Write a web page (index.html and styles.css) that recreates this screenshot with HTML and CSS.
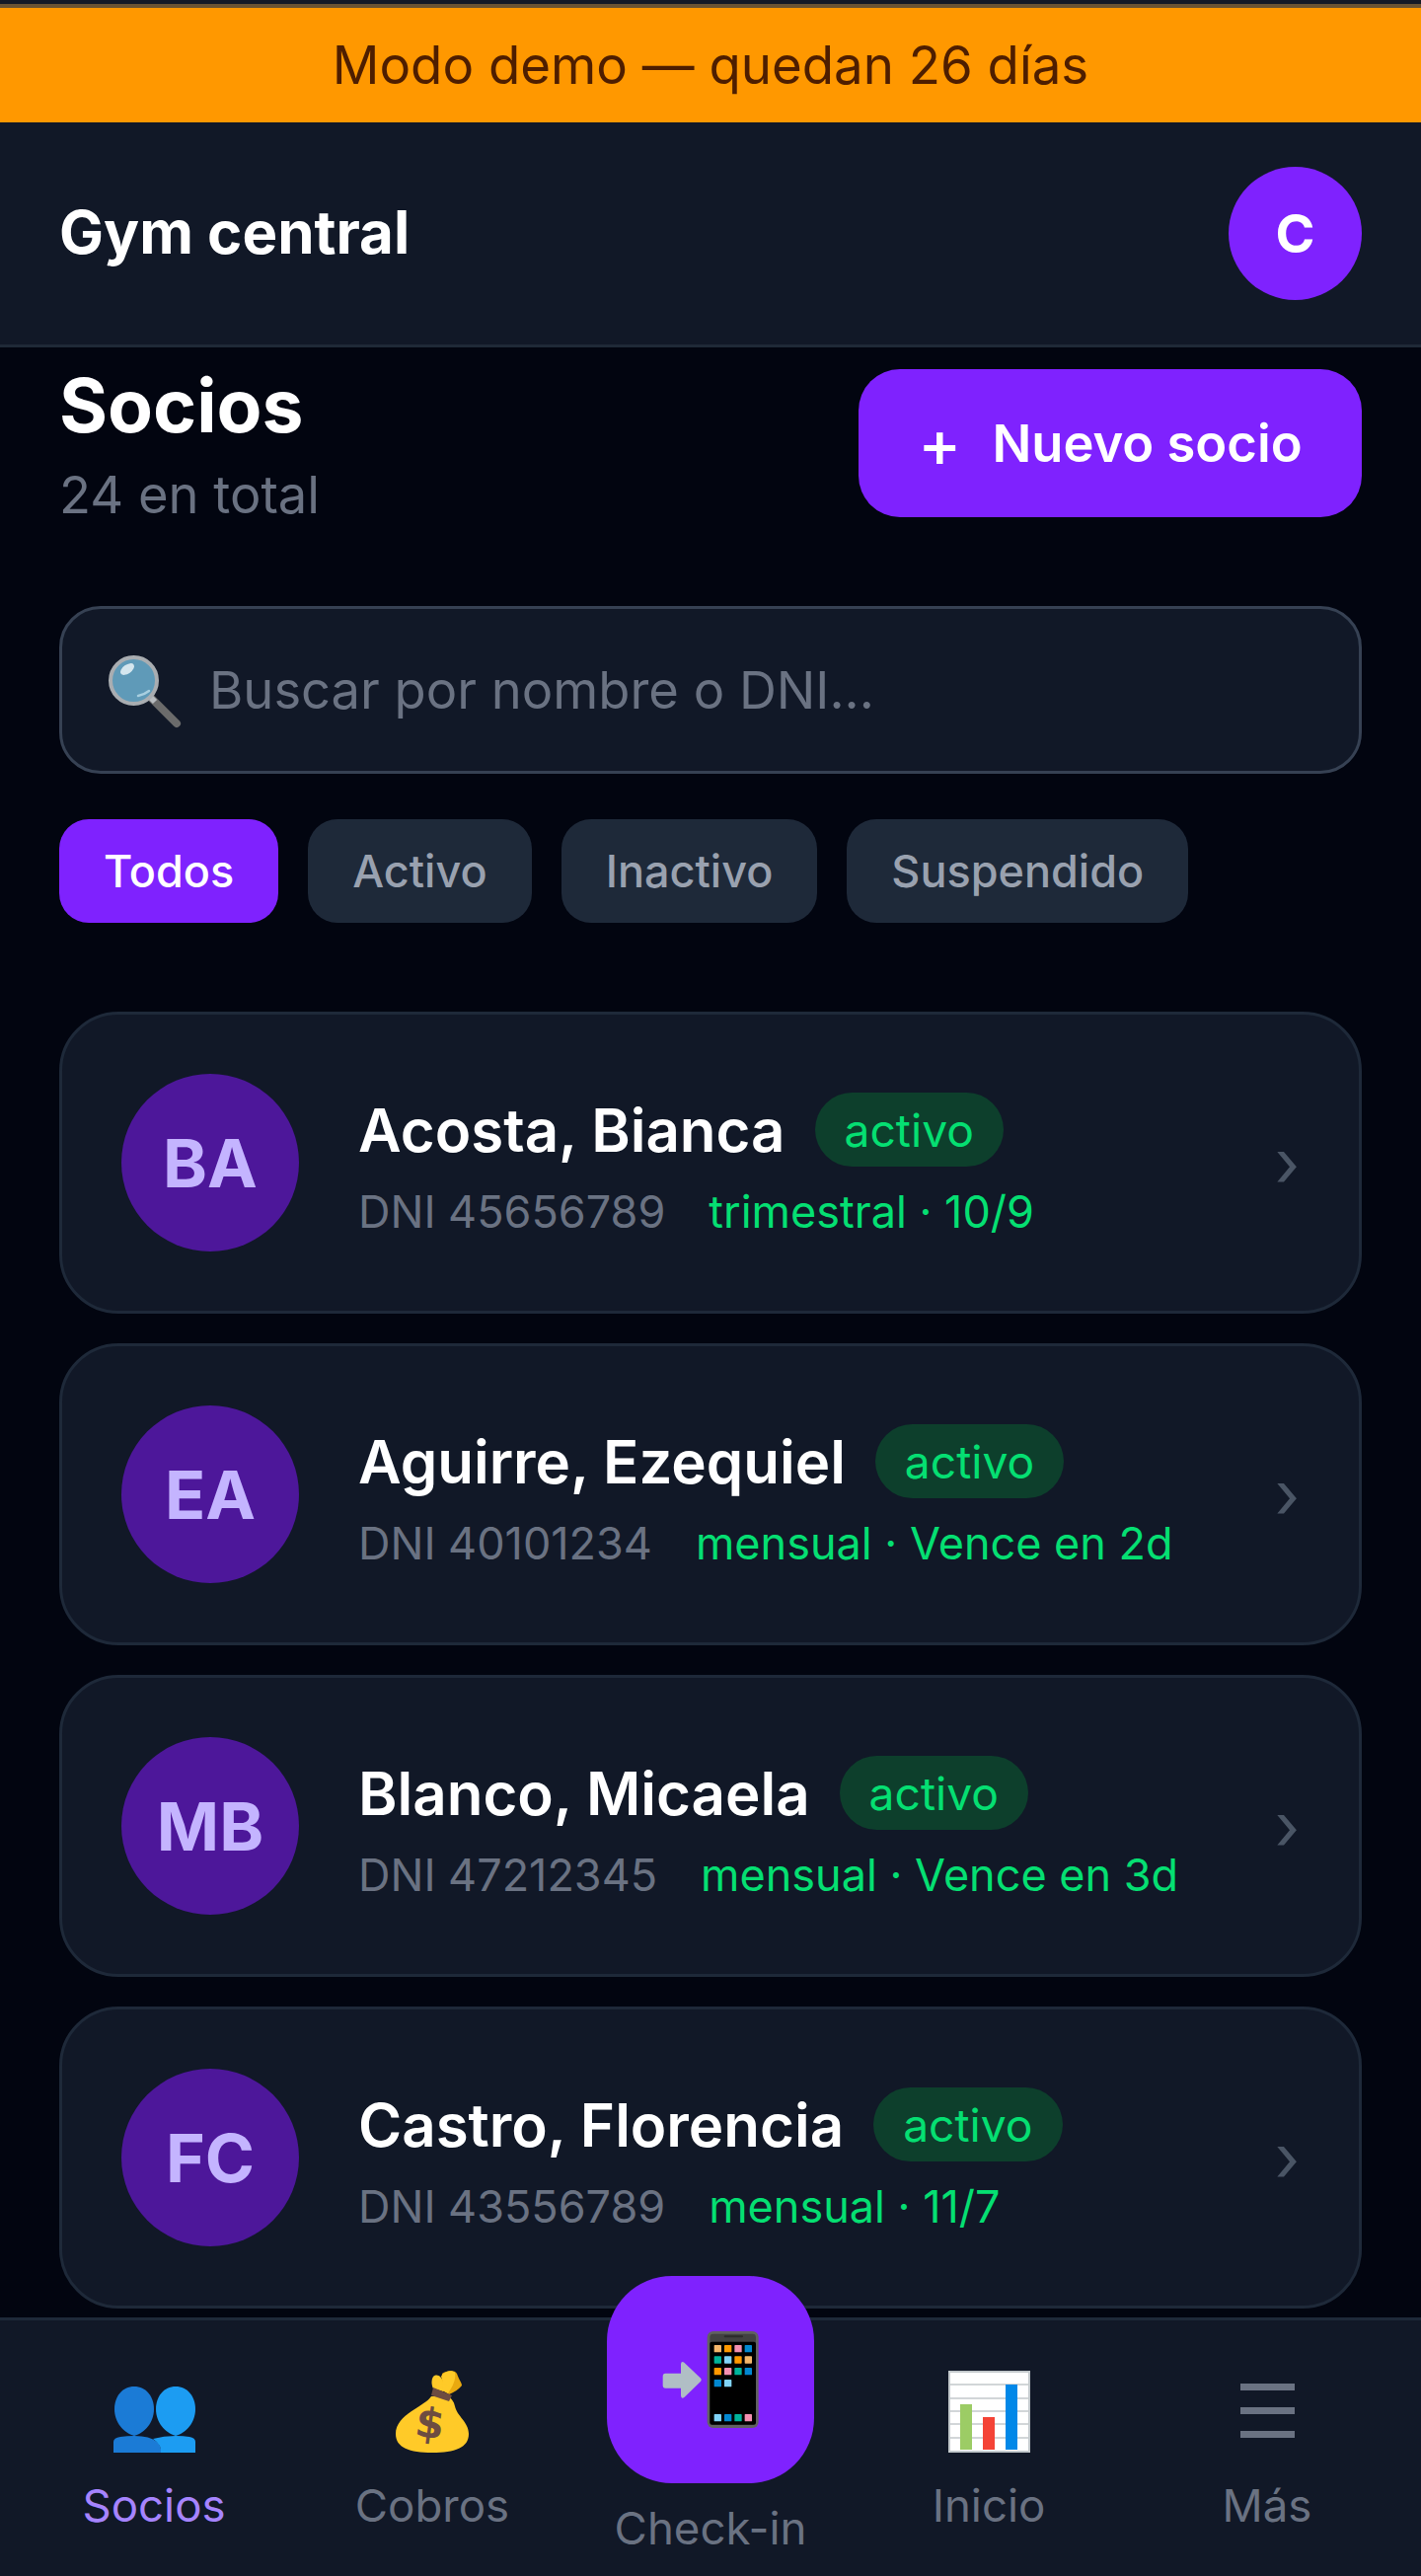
FILE: index.html
```html
<!DOCTYPE html>
<html lang="es">
<head>
    <meta charset="UTF-8">
    <meta name="viewport" content="width=device-width, initial-scale=1.0">
    <title>Socios</title>
    <link rel="stylesheet" href="styles.css">
</head>
<body>
    <div class="app">
        <div class="demo-banner">Modo demo — quedan 26 días</div>

        <header class="topbar">
            <div class="gym-name">Gym central</div>
            <div class="user-avatar">C</div>
        </header>

        <main class="content">
            <div class="page-head">
                <div>
                    <h1>Socios</h1>
                    <div class="total">24 en total</div>
                </div>
                <button class="new-btn"><span class="plus">+</span>Nuevo socio</button>
            </div>

            <div class="search">
                <svg class="search-icon" viewBox="0 0 74 74">
                    <path d="M42 42 L69 69" stroke="#6b6b6b" stroke-width="8" stroke-linecap="round"/>
                    <path d="M41 41 L47 47" stroke="#b8bcc0" stroke-width="6"/>
                    <circle cx="25.5" cy="25.5" r="23.5" fill="#5f9ab8" stroke="#a9adb1" stroke-width="4"/>
                    <ellipse cx="19" cy="14" rx="8" ry="4.5" transform="rotate(-35 19 14)" fill="#d5e6ee"/>
                    <path d="M30 41 Q36 40 41 36" stroke="#a8cfe0" stroke-width="2.5" fill="none" stroke-linecap="round"/>
                </svg>
                <input type="text" placeholder="Buscar por nombre o DNI...">
            </div>

            <div class="filters">
                <button class="chip active">Todos</button>
                <button class="chip">Activo</button>
                <button class="chip">Inactivo</button>
                <button class="chip">Suspendido</button>
            </div>

            <div class="member-list">
                <div class="member">
                    <div class="member-avatar">BA</div>
                    <div class="member-info">
                        <div class="member-top"><span class="member-name">Acosta, Bianca</span><span class="badge">activo</span></div>
                        <div class="member-sub"><span class="dni">DNI 45656789</span><span class="plan">trimestral · 10/9</span></div>
                    </div>
                    <span class="chevron">›</span>
                </div>
                <div class="member">
                    <div class="member-avatar">EA</div>
                    <div class="member-info">
                        <div class="member-top"><span class="member-name">Aguirre, Ezequiel</span><span class="badge">activo</span></div>
                        <div class="member-sub"><span class="dni">DNI 40101234</span><span class="plan">mensual · Vence en 2d</span></div>
                    </div>
                    <span class="chevron">›</span>
                </div>
                <div class="member">
                    <div class="member-avatar">MB</div>
                    <div class="member-info">
                        <div class="member-top"><span class="member-name">Blanco, Micaela</span><span class="badge">activo</span></div>
                        <div class="member-sub"><span class="dni">DNI 47212345</span><span class="plan">mensual · Vence en 3d</span></div>
                    </div>
                    <span class="chevron">›</span>
                </div>
                <div class="member">
                    <div class="member-avatar">FC</div>
                    <div class="member-info">
                        <div class="member-top"><span class="member-name">Castro, Florencia</span><span class="badge">activo</span></div>
                        <div class="member-sub"><span class="dni">DNI 43556789</span><span class="plan">mensual · 11/7</span></div>
                    </div>
                    <span class="chevron">›</span>
                </div>
            </div>
        </main>

        <nav class="bottom-nav">
            <a class="nav-item current">
                <svg class="nav-icon people-icon" viewBox="0 0 84 67">
                    <path d="M22 0 C34 0 42 10 42 23 C42 36 33 47 22 50 C11 47 2 36 2 23 C2 10 10 0 22 0 Z" fill="#1b7bd6"/>
                    <path d="M1 67 V56 Q1 52 8 51 Q15 50 22 50 Q38 50 45 56 Q50 61 49 67 Z" fill="#1b7bd6"/>
                    <path d="M64 0 C76 0 84 10 84 23 C84 36 75 47 64 50 C53 47 44 36 44 23 C44 10 52 0 64 0 Z" fill="#1c9cf2"/>
                    <path d="M41 53 Q52 50 64 50 Q72 50 78 51 Q84 52 84 56 V67 H49 Q50 59 41 53 Z" fill="#1c9cf2"/>
                </svg>
                <span>Socios</span>
            </a>
            <a class="nav-item">
                <svg class="nav-icon bag-icon" viewBox="0 0 74 83">
                    <path d="M47 3 C51 0 60 -1 62 3 C64 9 67 12 67 15 C64 19 59 22 54 24 L46 19 Z" fill="#e9a90f"/>
                    <path d="M38 6 C41 3 44 5 45 6 C48 9 49 13 48 21 L38 18 C36 14 36 9 38 6 Z" fill="#ffca28"/>
                    <path d="M46 6 C49 0 58 -1 60 2 C61 8 59 14 53 23 L47 20 C48 14 48 9 46 6 Z" fill="#ffca28"/>
                    <path d="M36 26 C30 36 0 44 0 64 C0 78 14 83 37 83 C60 83 74 78 74 64 C74 52 62 46 60 36 C59 31 56 28 54 26 Z" fill="#ffca28"/>
                    <path d="M38 17 L57 25 L54 31 L36 25 Z" fill="#6d4c41"/>
                    <text class="bag-mark" x="35" y="68" transform="rotate(8 35 52)">$</text>
                </svg>
                <span>Cobros</span>
            </a>
            <a class="nav-item checkin">
                <div class="checkin-btn">
                    <svg class="phone-icon" viewBox="60 68 294 294">
                        <path d="M70 196 H117 V168 Q118 158 127 163 L176 210 Q182 216 176 222 L128 268 Q118 276 117 264 V241 H70 Q62 241 62 232 V205 Q62 196 70 196 Z" fill="#b0bec5"/>
                        <rect x="197" y="68" width="156" height="294" rx="18" fill="#616161"/>
                        <rect x="205" y="76" width="140" height="276" rx="10" fill="#424242"/>
                        <rect x="205" y="100" width="140" height="252" rx="6" fill="#000"/>
                        <rect x="248" y="81" width="58" height="6" rx="3" fill="#2b2b2b"/>
                        <g fill="#f4b66b">
                            <rect x="218" y="110" width="22" height="22" rx="2"/>
                            <rect x="311" y="144" width="22" height="22" rx="2"/>
                        </g>
                        <g fill="#ff9800">
                            <rect x="249" y="110" width="22" height="22" rx="2"/>
                            <rect x="280" y="144" width="22" height="22" rx="2"/>
                            <rect x="218" y="179" width="22" height="22" rx="2"/>
                        </g>
                        <g fill="#f48fb1">
                            <rect x="280" y="110" width="22" height="22" rx="2"/>
                            <rect x="249" y="179" width="22" height="22" rx="2"/>
                            <rect x="311" y="320" width="22" height="22" rx="2"/>
                        </g>
                        <g fill="#0288d1">
                            <rect x="311" y="110" width="22" height="22" rx="2"/>
                            <rect x="311" y="179" width="22" height="22" rx="2"/>
                            <rect x="218" y="215" width="22" height="22" rx="2"/>
                            <rect x="249" y="320" width="22" height="22" rx="2"/>
                        </g>
                        <g fill="#00b39b">
                            <rect x="218" y="144" width="22" height="22" rx="2"/>
                            <rect x="280" y="179" width="22" height="22" rx="2"/>
                            <rect x="280" y="320" width="22" height="22" rx="2"/>
                        </g>
                        <g fill="#81d4fa">
                            <rect x="249" y="144" width="22" height="22" rx="2"/>
                            <rect x="249" y="215" width="22" height="22" rx="2"/>
                            <rect x="218" y="320" width="22" height="22" rx="2"/>
                        </g>
                    </svg>
                </div>
                <span>Check-in</span>
            </a>
            <a class="nav-item">
                <svg class="nav-icon chart-icon" viewBox="0 0 83 83">
                    <rect width="83" height="83" fill="#fff"/>
                    <path d="M0 14 H83 M0 28 H83 M0 41 H83 M0 54 H83 M0 68 H83" stroke="#c3c9cc" stroke-width="1.5"/>
                    <rect x="12" y="34" width="12" height="46" fill="#9ccc65"/>
                    <rect x="35" y="47" width="12" height="33" fill="#f44336"/>
                    <rect x="58" y="14" width="12" height="66" fill="#0288e8"/>
                    <rect x="1" y="1" width="81" height="81" fill="none" stroke="#c3c9cc" stroke-width="2"/>
                </svg>
                <span>Inicio</span>
            </a>
            <a class="nav-item">
                <div class="menu-icon"><i></i><i></i><i></i></div>
                <span>Más</span>
            </a>
        </nav>
    </div>
</body>
</html>
```

FILE: styles.css
```css
* {
    box-sizing: border-box;
}

body {
    font-family: Inter, 'Noto Sans', sans-serif;
    margin: 0;
    background: #020510;
    color: white;
}

.app {
    position: relative;
    height: 2610px;
    overflow: hidden;
    display: flex;
    flex-direction: column;
    border-top: 4px solid #141a26;
}

.demo-banner {
    height: 120px;
    border-top: 4px solid #6b5433;
    background-color: #ff9800;
    color: #4e1e00;
    font-size: 52.8px;
    display: flex;
    align-items: center;
    justify-content: center;
}

.topbar {
    height: 228px;
    background-color: #111827;
    border-bottom: 3px solid #1f2937;
    padding: 0 60px;
    display: flex;
    align-items: center;
    justify-content: space-between;
}

.gym-name {
    font-size: 60px;
    font-weight: 700;
    margin-bottom: 3px;
}

.user-avatar {
    width: 135px;
    height: 135px;
    border-radius: 50%;
    background-color: #7f22fe;
    font-size: 54px;
    font-weight: 700;
    display: flex;
    align-items: center;
    justify-content: center;
}

.content {
    padding: 22px 60px 0;
}

.page-head {
    height: 150px;
    display: flex;
    justify-content: space-between;
    align-items: flex-start;
    margin-bottom: 90px;
}

h1 {
    font-size: 75px;
    font-weight: 700;
    line-height: 73px;
    margin: 0;
}

.total {
    color: #6a7282;
    font-size: 52.5px;
    margin-top: 22px;
}

.new-btn {
    font-family: inherit;
    width: 510px;
    height: 150px;
    border: none;
    border-radius: 42px;
    background-color: #7f22fe;
    color: white;
    font-size: 52.5px;
    font-weight: 600;
    display: flex;
    align-items: center;
    justify-content: center;
}

.plus {
    font-size: 66px;
    font-weight: 500;
    margin-right: 31px;
}

.search {
    height: 170px;
    background-color: #111827;
    border: 3px solid #364153;
    border-radius: 42px;
    padding: 0 47px;
    display: flex;
    align-items: center;
    gap: 28px;
    margin-bottom: 46px;
}

.search-icon {
    width: 74px;
    height: 74px;
    flex: none;
    margin-top: 4px;
}

.search input {
    flex: 1;
    background: none;
    border: none;
    outline: none;
    padding: 0;
    color: white;
    font-family: inherit;
    font-size: 52.5px;
}

.search input::placeholder {
    color: #6a7282;
    opacity: 1;
}

.filters {
    display: flex;
    gap: 30px;
    margin-bottom: 90px;
}

.chip {
    font-family: inherit;
    height: 105px;
    padding: 0 45px;
    border: none;
    border-radius: 30px;
    background-color: #1e2939;
    color: #99a1af;
    font-size: 45px;
    font-weight: 500;
}

.chip.active {
    background-color: #7f22fe;
    color: white;
}

.member-list {
    display: flex;
    flex-direction: column;
    gap: 30px;
}

.member {
    height: 306px;
    background-color: #111827;
    border: 3px solid #1e2939;
    border-radius: 60px;
    padding: 0 60px;
    display: flex;
    align-items: center;
}

.member-avatar {
    width: 180px;
    height: 180px;
    border-radius: 50%;
    background-color: #4d179a;
    color: #c4b4ff;
    font-size: 68px;
    font-weight: 700;
    display: flex;
    align-items: center;
    justify-content: center;
    flex: none;
    margin-right: 60px;
}

.member-info {
    flex: 1;
    padding-top: 6px;
}

.member-top {
    display: flex;
    align-items: center;
    gap: 30px;
}

.member-name {
    font-size: 60px;
    font-weight: 600;
}

.badge {
    background-color: #0d3f2c;
    color: #05df72;
    font-size: 46.2px;
    border-radius: 38px;
    height: 75px;
    padding: 0 30px;
    display: flex;
    align-items: center;
}

.member-sub {
    font-size: 45px;
    margin-top: 18px;
    display: flex;
    gap: 44px;
}

.dni {
    color: #6a7282;
}

.plan {
    color: #05df72;
}

.chevron {
    color: #4a5565;
    font-size: 66px;
}

.bottom-nav {
    position: absolute;
    left: 0;
    right: 0;
    bottom: 0;
    height: 262px;
    background-color: #111827;
    border-top: 3px solid #1e2939;
    display: flex;
    padding: 0 15px;
}

.nav-item {
    flex: 1;
    display: flex;
    flex-direction: column;
    align-items: center;
    justify-content: flex-end;
    padding-bottom: 44px;
    color: #6a7282;
    font-size: 45.6px;
}

.nav-item.current {
    color: #a684ff;
}

.nav-icon {
    flex: none;
    margin-bottom: 26px;
}

.people-icon {
    width: 84px;
    height: 67px;
}

.bag-icon {
    width: 74px;
    height: 83px;
}

.chart-icon {
    width: 83px;
    height: 83px;
}

.checkin {
    padding-bottom: 21px;
}

.checkin-btn {
    width: 210px;
    height: 210px;
    border-radius: 66px;
    background-color: #7f22fe;
    display: flex;
    align-items: center;
    justify-content: center;
    flex: none;
    margin-bottom: 18px;
}

.phone-icon {
    width: 98px;
    height: 98px;
}

.menu-icon {
    width: 55px;
    height: 83px;
    padding-top: 13px;
    display: flex;
    flex-direction: column;
    gap: 17px;
    flex: none;
    margin-bottom: 26px;
}

.menu-icon i {
    display: block;
    height: 7px;
    background-color: #6a7282;
}

.bag-mark {
    font-family: 'DejaVu Sans', sans-serif;
    font-size: 42px;
    font-weight: 700;
    fill: #6d4c41;
    text-anchor: middle;
}
```
